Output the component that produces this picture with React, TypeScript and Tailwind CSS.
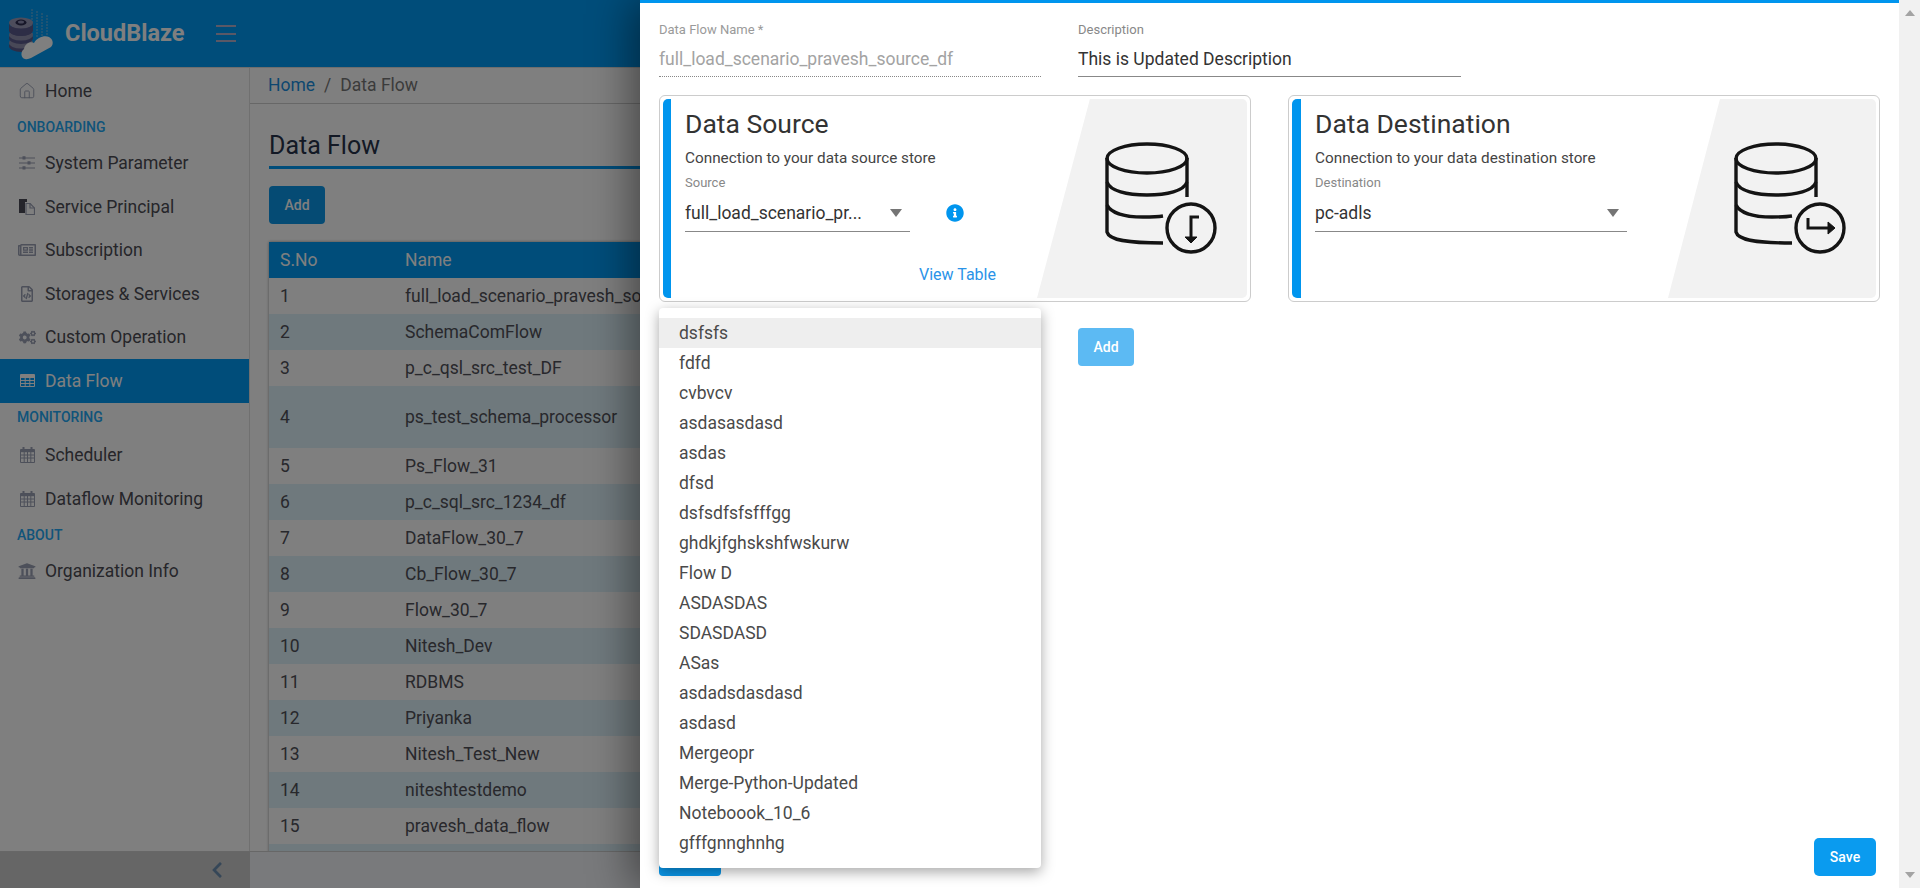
import { Home } from "lucide-react";
import {
  FaRegNewspaper,
  FaRegFileCode,
  FaCogs,
  FaUniversity,
  FaInfoCircle,
  FaChevronLeft,
} from "react-icons/fa";
import type { ReactNode } from "react";

const rows = [
  "full_load_scenario_pravesh_source_df",
  "SchemaComFlow",
  "p_c_qsl_src_test_DF",
  "ps_test_schema_processor",
  "Ps_Flow_31",
  "p_c_sql_src_1234_df",
  "DataFlow_30_7",
  "Cb_Flow_30_7",
  "Flow_30_7",
  "Nitesh_Dev",
  "RDBMS",
  "Priyanka",
  "Nitesh_Test_New",
  "niteshtestdemo",
  "pravesh_data_flow",
  "",
];

const options = [
  "dsfsfs",
  "fdfd",
  "cvbvcv",
  "asdasasdasd",
  "asdas",
  "dfsd",
  "dsfsdfsfsfffgg",
  "ghdkjfghskshfwskurw",
  "Flow D",
  "ASDASDAS",
  "SDASDASD",
  "ASas",
  "asdadsdasdasd",
  "asdasd",
  "Mergeopr",
  "Merge-Python-Updated",
  "Noteboook_10_6",
  "gfffgnnghnhg",
];

function Logo() {
  return (
    <svg width="48" height="54" viewBox="0 0 48 54" className="ml-2 mt-[2px] shrink-0">
      <path d="M24 1v28M29 3v26M34 5v24M39 7v20" stroke="#7fb8de" strokeWidth="1.4" strokeDasharray="2 1" opacity="0.7" />
      <ellipse cx="13" cy="38" rx="12" ry="6" fill="#5b5b8c" />
      <ellipse cx="13" cy="35" rx="12" ry="5.5" fill="#9090ae" />
      <ellipse cx="13" cy="30" rx="12" ry="6" fill="#5b5b8c" />
      <ellipse cx="13" cy="27" rx="12" ry="5.5" fill="#9090ae" />
      <ellipse cx="13" cy="22" rx="12" ry="6" fill="#5b5b8c" />
      <ellipse cx="13" cy="15" rx="12" ry="5.5" fill="#9a9ab8" />
      <path d="M1 15v7c0 3 5 6 12 6s12-3 12-6v-7c0 3-5 6-12 6s-12-3-12-6z" fill="#5b5b8c" />
      <ellipse cx="13" cy="14.5" rx="5.5" ry="3" fill="#2c2c50" />
      <ellipse cx="13" cy="14" rx="3" ry="1.5" fill="#8c8cb0" />
      <path
        d="M17 51C13 50 12 44 16 41C17 35 23 33 26 35C29 29 37 27 41 29C45 31 46 36 43 39L23 50C21 51 19 51.5 17 51Z"
        fill="#ffffff"
      />
    </svg>
  );
}

function SlidersIcon() {
  return (
    <svg width="16" height="14" viewBox="0 0 16 14" fill="currentColor">
      <path d="M0 1.5h16v1H0zM0 6.5h16v1H0zM0 11.5h16v1H0z" />
      <path d="M3.5.3h3v3.2h-3zM8.5 5.3h3v3.2h-3zM3.5 10.3h3v3.2h-3z" />
    </svg>
  );
}

function PagesIcon() {
  return (
    <svg width="16" height="16" viewBox="0 0 16 16">
      <path d="M0 0h8v3H6v11H0z" fill="#4a4a56" />
      <path d="M7 4.5h4.2L15.5 9v6.5H7z" fill="none" stroke="currentColor" strokeWidth="1.2" />
      <path d="M11 4.5V9h4.5" fill="none" stroke="currentColor" strokeWidth="1.2" />
    </svg>
  );
}

function GridIcon() {
  return (
    <svg width="15" height="13" viewBox="0 0 15 13" fill="none" stroke="currentColor" strokeWidth="1">
      <path d="M.5.5h14v12H.5zM.5 3.5h14M.5 6.5h14M.5 9.5h14M5.2.5v12M9.8.5v12" />
      <path d="M.5 2h14" strokeWidth="2" />
    </svg>
  );
}

function CalendarIcon() {
  return (
    <svg width="15" height="16" viewBox="0 0 15 16" fill="none" stroke="currentColor" strokeWidth="1">
      <path d="M.5 2.5h14v13H.5zM.5 8h14M.5 11h14M4.2 5v10.5M7.5 5v10.5M10.8 5v10.5" />
      <path d="M.5 4h14" strokeWidth="2.4" />
      <path d="M3.5 0v3M11.5 0v3" strokeWidth="2" />
    </svg>
  );
}

function NavItem({ icon, label, active }: { icon: ReactNode; label: string; active?: boolean }) {
  return (
    <div
      className={`flex h-[43.5px] items-center text-[17.5px] ${
        active ? "bg-[#009bf5] text-white" : "text-[#4c4c54]"
      }`}
    >
      <span className={`flex w-[45px] justify-center pl-[9px] text-[16px] ${active ? "text-white" : "text-[#9aa0b4]"}`}>
        {icon}
      </span>
      <span>{label}</span>
    </div>
  );
}

function NavLabel({ children }: { children: ReactNode }) {
  return (
    <div className="flex h-[29px] items-center pl-[17px] text-[14px] font-medium text-[#22a8f5]">
      {children}
    </div>
  );
}

function Sidebar() {
  return (
    <aside className="flex w-[250px] shrink-0 flex-col border-r border-[#e0e0e0] pt-[1px]">
      <NavItem icon={<Home size={18} strokeWidth={1.25} />} label="Home" />
      <NavLabel>ONBOARDING</NavLabel>
      <NavItem icon={<SlidersIcon />} label="System Parameter" />
      <NavItem icon={<PagesIcon />} label="Service Principal" />
      <NavItem icon={<FaRegNewspaper className="text-[18px]" />} label="Subscription" />
      <NavItem icon={<FaRegFileCode />} label="Storages & Services" />
      <NavItem icon={<FaCogs className="text-[17px]" />} label="Custom Operation" />
      <NavItem icon={<GridIcon />} label="Data Flow" active />
      <NavLabel>MONITORING</NavLabel>
      <div className="h-[2px]" />
      <NavItem icon={<CalendarIcon />} label="Scheduler" />
      <NavItem icon={<CalendarIcon />} label="Dataflow Monitoring" />
      <NavLabel>ABOUT</NavLabel>
      <NavItem icon={<FaUniversity className="text-[18px]" />} label="Organization Info" />
    </aside>
  );
}

function Content() {
  return (
    <main className="min-w-0 flex-1 overflow-hidden">
      <div className="flex h-[36px] items-center border-b border-[#cfcfcf] pl-[18px] text-[17.5px] text-[#777]">
        <span className="text-[#1a8fe0]">Home</span>
        <span className="mx-[9px]">/</span>
        <span>Data Flow</span>
      </div>
      <div className="pl-[19px]">
        <h2 className="mt-[26px] h-[39px] w-[700px] border-b-[3px] border-[#009bf5] text-[25px] leading-[31px] text-[#26324a]">
          Data Flow
        </h2>
        <div className="mt-[17px] flex h-[38px] w-[56px] items-center justify-center rounded-[4px] bg-[#0a96e8] text-[14px] font-medium text-white">
          Add
        </div>
        <div className="mt-[18px] w-[900px] shadow-[0_0_3px_rgba(0,0,0,0.4)]">
          <div className="flex h-[36px] items-center bg-[#009bf5] text-[17.5px] text-white">
            <span className="w-[136px] pl-[11px]">S.No</span>
            <span>Name</span>
          </div>
          {rows.map((name, i) => (
            <div
              key={i}
              className={`flex items-center text-[17.5px] text-[#505058] ${i === 3 ? "h-[62px]" : "h-[36px]"} ${
                i % 2 === 1 ? "bg-[#def2fa]" : "bg-white"
              }`}
            >
              <span className="w-[136px] pl-[11px]">{i + 1}</span>
              <span className="whitespace-nowrap">{name}</span>
            </div>
          ))}
        </div>
      </div>
    </main>
  );
}

function DbIcon({ kind }: { kind: "in" | "out" }) {
  return (
    <svg width="120" height="120" viewBox="0 0 120 120" fill="none" stroke="#141414" strokeWidth="3.4">
      <ellipse cx="47" cy="23.5" rx="40" ry="14.5" />
      <path d="M7 23v74c2 8 20 11 56 11" />
      <path d="M87 23v39" />
      <path d="M7 47c3 9 20 13 40 13s37-4 40-13" />
      <path d="M7 70c4 8 18 12 36 12 8 0 14 0 20-1" />
      <circle cx="91" cy="93" r="24" />
      {kind === "in" ? (
        <>
          <path d="M99 82H91V103" strokeWidth="3" />
          <path d="M85 102H97L91 108Z" fill="#141414" strokeWidth="1" />
        </>
      ) : (
        <>
          <path d="M79 83V93H100" strokeWidth="3" />
          <path d="M99 87V99L106 93Z" fill="#141414" strokeWidth="1" />
        </>
      )}
    </svg>
  );
}

function Caret() {
  return <span className="h-0 w-0 border-x-[6.5px] border-t-[8px] border-x-transparent border-t-[#757575]" />;
}

function SelectBox({ value, width }: { value: string; width: string }) {
  return (
    <div className={`mt-[3px] flex h-[39px] items-center justify-between border-b border-[#888] pr-[8px] pt-[2px] text-[17.5px] text-[#333] ${width}`}>
      <span>{value}</span>
      <Caret />
    </div>
  );
}

function Card({
  title,
  sub,
  label,
  children,
  icon,
  art,
  bar,
}: {
  title: string;
  sub: string;
  label: string;
  children: ReactNode;
  icon: ReactNode;
  art: string;
  bar: string;
}) {
  return (
    <div className="flex h-[207px] w-[592px] rounded-[6px] border border-[#cccccc] p-[3px]">
      <div className={`shrink-0 rounded-l-[5px] bg-[#0095ee] ${bar}`} />
      <div className="min-w-0 flex-1 pl-[14px] pt-[8px]">
        <h3 className="h-[34px] text-[26.5px] leading-[34px] text-[#333]">{title}</h3>
        <p className="mt-[7px] h-[21px] text-[15.3px] leading-[21px] text-[#444]">{sub}</p>
        <p className="mt-[7px] h-[14px] text-[13px] leading-[14px] text-[#888]">{label}</p>
        {children}
      </div>
      <div className={art}>{icon}</div>
    </div>
  );
}

function Panel() {
  return (
    <div className="absolute inset-y-0 right-0 flex w-[1280px] bg-white shadow-[-8px_0_40px_rgba(0,0,0,0.45)]">
      <div className="relative flex min-w-0 flex-1 flex-col border-t-[3px] border-[#0095ee] pl-[19px]">
        <div className="flex gap-[37px] pt-[19px]">
          <div className="w-[382px]">
            <p className="h-4 text-[13px] leading-4 text-[#9a9a9a]">Data Flow Name *</p>
            <div className="flex h-[39px] items-center border-b border-dotted border-[#888] pt-[4px] text-[17.5px] text-[#a3a3a3]">
              full_load_scenario_pravesh_source_df
            </div>
          </div>
          <div className="w-[383px]">
            <p className="h-4 text-[13px] leading-4 text-[#888]">Description</p>
            <div className="flex h-[39px] items-center border-b border-[#888] pt-[4px] text-[17.5px] text-[#333]">
              This is Updated Description
            </div>
          </div>
        </div>

        <div className="mt-[18px] flex gap-[37px]">
          <Card
            title="Data Source"
            sub="Connection to your data source store"
            label="Source"
            bar="w-[8px]"
            icon={<DbIcon kind="in" />}
            art="ml-auto h-[199px] w-[210px] shrink-0 rounded-r-[5px] bg-[#f2f2f2] pl-[63px] pt-[36px] [clip-path:polygon(25.2%_0,100%_0,100%_100%,0_100%)]"
          >
            <div className="flex items-center">
              <SelectBox value="full_load_scenario_pr..." width="w-[225px]" />
              <FaInfoCircle className="ml-[36px] mt-[3px] text-[18px] text-[#0095ee]" />
            </div>
            <div className="mt-[31px] pl-[234px] text-[16px] leading-[24px] text-[#2a93e8]">View Table</div>
          </Card>
          <Card
            title="Data Destination"
            sub="Connection to your data destination store"
            label="Destination"
            bar="w-[9px]"
            icon={<DbIcon kind="out" />}
            art="ml-auto h-[199px] w-[208px] shrink-0 rounded-r-[5px] bg-[#f2f2f2] pl-[61px] pt-[36px] [clip-path:polygon(25%_0,100%_0,100%_100%,0_100%)]"
          >
            <SelectBox value="pc-adls" width="w-[312px]" />
          </Card>
        </div>

        <div className="ml-[419px] mt-[26px] flex h-[38px] w-[56px] items-center justify-center rounded-[4px] bg-[#5cbaf3] text-[14px] font-medium text-white">
          Add
        </div>

        <div className="mt-auto flex items-end justify-between pb-[12px] pr-[23px]">
          <div className="h-[38px] w-[62px] rounded-[4px] bg-[#0a96e8]" />
          <div className="flex h-[38px] w-[62px] items-center justify-center rounded-[5px] bg-[#0a9bef] text-[14px] font-medium text-white">
            Save
          </div>
        </div>

        <div className="absolute left-[19px] top-[305px] w-[382px] rounded-[4px] bg-white py-[10px] shadow-[0_4px_14px_rgba(0,0,0,0.35)]">
          {options.map((o, i) => (
            <div
              key={o}
              className={`flex h-[30px] items-center pl-[20px] text-[17.5px] text-[#4a4a4a] ${i === 0 ? "bg-[#eeeeee]" : ""}`}
            >
              {o}
            </div>
          ))}
        </div>
      </div>

      <div className="flex w-[21px] shrink-0 flex-col items-center justify-between bg-[#f1f1f1] py-[10px]">
        <span className="h-0 w-0 border-x-[5px] border-b-[6px] border-x-transparent border-b-[#a3a3a3]" />
        <span className="h-0 w-0 border-x-[5px] border-t-[6px] border-x-transparent border-t-[#a3a3a3]" />
      </div>
    </div>
  );
}

export default function App() {
  return (
    <div className="relative flex h-screen w-full flex-col overflow-hidden bg-white font-['Roboto',sans-serif]">
      <header className="flex h-[68px] shrink-0 items-center border-b border-[#dddddd] bg-[#009bf5]">
        <Logo />
        <span className="ml-[9px] text-[23.5px] font-bold text-white">CloudBlaze</span>
        <div className="ml-[31px] flex h-[17px] w-[20px] flex-col justify-between">
          <span className="h-[2px] bg-[#b5b0cc]" />
          <span className="h-[2px] bg-[#b5b0cc]" />
          <span className="h-[2px] bg-[#b5b0cc]" />
        </div>
      </header>
      <div className="flex min-h-0 flex-1">
        <Sidebar />
        <Content />
      </div>
      <footer className="flex h-[37px] shrink-0 border-t border-[#cfcfcf] bg-[#f2f5f8]">
        <div className="flex w-[250px] items-center justify-end bg-[#cccccc] pr-[24px]">
          <FaChevronLeft className="text-[18px] text-[#6d8fb0]" />
        </div>
      </footer>
      <div className="absolute inset-0 bg-black/50" />
      <Panel />
    </div>
  );
}
